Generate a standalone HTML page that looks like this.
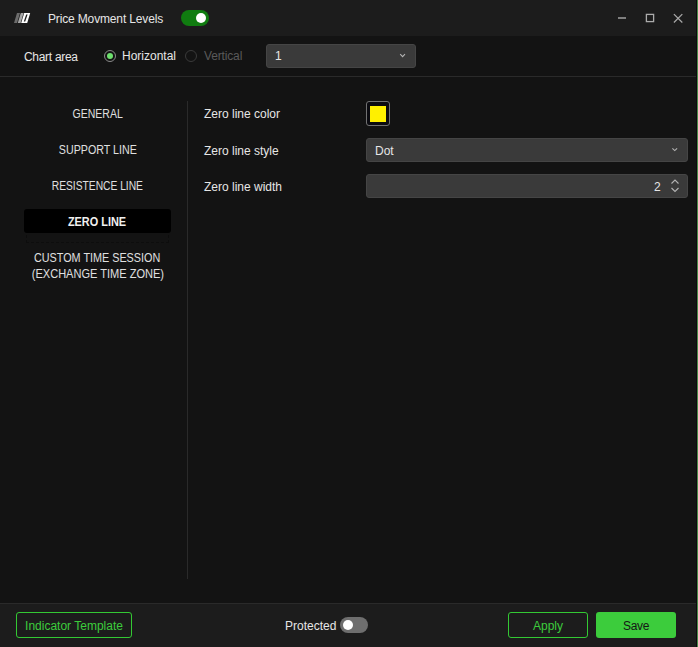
<!DOCTYPE html>
<html><head><meta charset="utf-8">
<style>
*{box-sizing:border-box;margin:0;padding:0}
html,body{width:698px;height:647px;overflow:hidden;background:#131313;font-family:"Liberation Sans",sans-serif;color:#e6e6e6;font-size:12px}
.abs{position:absolute}
.title{left:0;top:0;width:698px;height:36px;background:#1c1c1c}
.footer{left:0;top:603px;width:698px;height:44px;background:#1c1c1c;border-top:1px solid #2a2a2a}
.sep{left:0;top:76px;width:697px;height:1px;background:#2a2a2a}
.vdiv{left:187px;top:101px;width:1px;height:478px;background:#2a2a2a}
.redge{left:697px;top:0;width:1px;height:647px;background:#4a8a4a}
.redge2{left:696px;top:0;width:1px;height:647px;background:#0c0c0c}
.txt{white-space:nowrap;line-height:14px}
.toggle{width:28px;height:16px;border-radius:8px}
.knob{width:10px;height:10px;border-radius:50%;background:#fff;position:absolute;top:3px}
.btn{height:26px;border-radius:3px;text-align:center;line-height:26px;font-size:12px}
.field{background:#3a3a3a;border:1px solid #454545;border-radius:3px;height:24px}
.sx{display:inline-block}
.nav{width:147px;text-align:center;left:24px;line-height:14px;color:#e0e0e0}
</style></head><body>
<div class="abs title"></div>
<!-- logo -->
<svg class="abs" style="left:0;top:0" width="40" height="30" viewBox="0 0 40 30">
 <polygon points="17,13 20,13 17,23 14,23" fill="#6c6c6c"/>
 <polygon points="20.8,13 23.6,13 20.6,23 17.8,23" fill="#a6a6a6"/>
 <polygon points="24.2,13 30.2,13 27.2,23 21.2,23" fill="#ffffff"/>
 <polygon points="26.2,14.6 27.6,14.6 25.2,21.4 23.8,21.4" fill="#1c1c1c"/>
</svg>
<div class="abs txt" style="left:48px;top:12px;font-size:12px;letter-spacing:-0.15px;color:#e6e6e6">Price Movment Levels</div>
<div class="abs toggle" style="left:181px;top:10px;background:#107c10"><div class="knob" style="left:15px"></div></div>
<!-- window controls -->
<svg class="abs" style="left:610px;top:5px" width="86" height="30">
 <line x1="8" y1="13" x2="16" y2="13" stroke="#ababab" stroke-width="1.4"/>
 <rect x="36.4" y="9.4" width="7.2" height="7.2" fill="none" stroke="#ababab" stroke-width="1.3"/>
 <line x1="63.9" y1="9.1" x2="72.3" y2="17.5" stroke="#ababab" stroke-width="1.2"/>
 <line x1="72.3" y1="9.1" x2="63.9" y2="17.5" stroke="#ababab" stroke-width="1.2"/>
</svg>

<div class="abs txt" style="left:24px;top:50px;letter-spacing:-0.3px">Chart area</div>
<div class="abs" style="left:104px;top:50px;width:12px;height:12px;border-radius:50%;border:1px solid #8a8a8a"><div class="abs" style="left:2px;top:2px;width:6px;height:6px;border-radius:50%;background:#6ee06e"></div></div>
<div class="abs txt" style="left:122px;top:49px">Horizontal</div>
<div class="abs" style="left:185px;top:50px;width:12px;height:12px;border-radius:50%;border:1px solid #3a3a3a"></div>
<div class="abs txt" style="left:204px;top:49px;color:#5a5a5a;letter-spacing:-0.15px">Vertical</div>
<div class="abs field" style="left:266px;top:44px;width:150px"></div>
<div class="abs txt" style="left:275px;top:49px">1</div>
<svg class="abs" style="left:398px;top:52px" width="8" height="6"><polyline points="2.2,2.2 4.6,4.6 7,2.2" fill="none" stroke="#b4b4b4" stroke-width="1.1"/></svg>
<div class="abs sep"></div>

<div class="abs nav txt" style="top:107px"><span class="sx" style="transform:scaleX(0.875)">GENERAL</span></div>
<div class="abs nav txt" style="top:143px"><span class="sx" style="transform:scaleX(0.89)">SUPPORT LINE</span></div>
<div class="abs nav txt" style="top:179px"><span class="sx" style="transform:scaleX(0.855)">RESISTENCE LINE</span></div>
<div class="abs" style="left:26px;top:220px;width:143px;height:23px;border:1px dashed #0d0d0d;border-top:none"></div>
<div class="abs" style="left:24px;top:209px;width:147px;height:24px;background:#000;border-radius:3px"></div>
<div class="abs nav txt" style="top:215px;font-weight:bold;color:#f0f0f0"><span class="sx" style="transform:scaleX(0.91)">ZERO LINE</span></div>
<div class="abs nav txt" style="top:251px;line-height:15px"><span class="sx" style="transform:scaleX(0.9)">CUSTOM TIME SESSION</span></div>
<div class="abs nav txt" style="top:267px;line-height:15px"><span class="sx" style="transform:scaleX(0.92)">(EXCHANGE TIME ZONE)</span></div>
<div class="abs vdiv"></div>

<div class="abs txt" style="left:204px;top:107px">Zero line color</div>
<div class="abs" style="left:366px;top:101px;width:24px;height:25px;border:1px solid #727272;border-radius:3px;background:#0b0b10"></div>
<div class="abs" style="left:370px;top:106px;width:16px;height:16px;background:#fff000"></div>
<div class="abs txt" style="left:204px;top:144px">Zero line style</div>
<div class="abs field" style="left:366px;top:138px;width:322px"></div>
<div class="abs txt" style="left:375px;top:144px">Dot</div>
<svg class="abs" style="left:670px;top:146px" width="9" height="7"><polyline points="2.4,2.4 4.75,4.6 7.1,2.4" fill="none" stroke="#b4b4b4" stroke-width="1.1"/></svg>
<div class="abs txt" style="left:204px;top:180px">Zero line width</div>
<div class="abs field" style="left:366px;top:174px;width:322px"></div>
<div class="abs txt" style="left:654px;top:180px">2</div>
<svg class="abs" style="left:670px;top:178px" width="11" height="16"><polyline points="1.5,5.5 5,2 8.5,5.5" fill="none" stroke="#b4b4b4" stroke-width="1.1"/><polyline points="1.5,10 5,13.5 8.5,10" fill="none" stroke="#b4b4b4" stroke-width="1.1"/></svg>

<div class="abs footer"></div>
<div class="abs btn" style="left:16px;top:612px;width:116px;border:1px solid #33c933;color:#3ccc3c">Indicator Template</div>
<div class="abs txt" style="left:285px;top:619px">Protected</div>
<div class="abs toggle" style="left:340px;top:617px;background:#6e6e6e"><div class="knob" style="left:3px"></div></div>
<div class="abs btn" style="left:508px;top:612px;width:80px;border:1px solid #33c933;color:#3ccc3c">Apply</div>
<div class="abs btn" style="left:596px;top:612px;width:80px;background:#3ccc3c;color:#161616;line-height:28px;letter-spacing:-0.3px">Save</div>

<div class="abs redge2"></div>
<div class="abs redge"></div>
</body></html>
